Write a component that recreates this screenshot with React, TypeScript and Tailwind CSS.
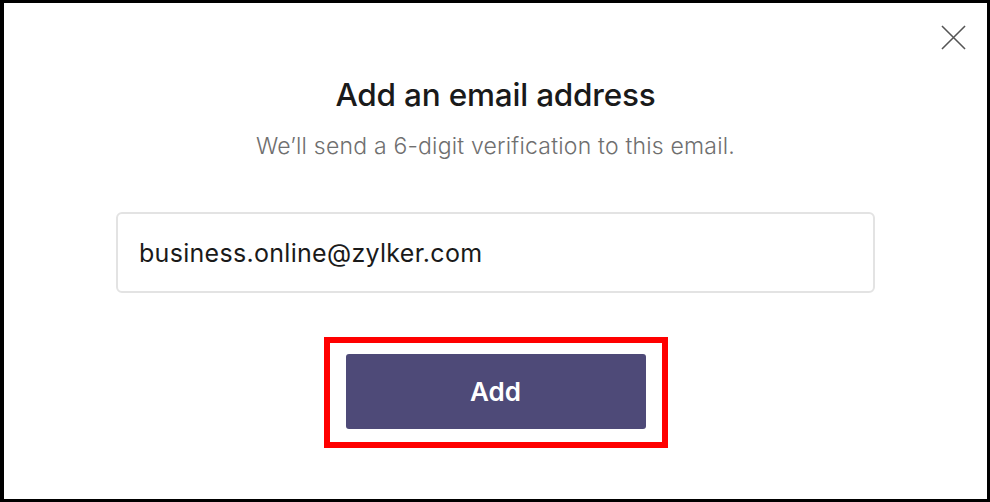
import React, { useState } from 'react';

export default function App() {
    const [email, setEmail] = useState('business.online@zylker.com');

    return (
        <div className="w-[990px] h-[502px] bg-white border-[3px] border-l-4 border-black relative" style={{ fontFamily: 'Inter, "Noto Sans", sans-serif' }}>
            <button className="absolute top-[19px] right-[19px] w-[30px] h-[30px] flex items-center justify-center text-[#555]">
                <svg width="25" height="25" viewBox="0 0 26 26" fill="none" stroke="currentColor" strokeWidth="1.6">
                    <path d="M1 1 L25 25 M25 1 L1 25" />
                </svg>
            </button>

            <div className="flex flex-col items-center pt-[72px]">
                <h3 className="text-[31.5px] leading-[40px] font-medium text-[#1a1a1a] tracking-[-0.2px]">Add an email address</h3>
                <p className="mt-[16px] text-[23px] leading-[30px] font-light text-[#6f6f6f] tracking-[0.2px]">We’ll send a 6-digit verification to this email.</p>

                <input
                    type="text"
                    value={email}
                    onChange={e => setEmail(e.target.value)}
                    className="mt-[51px] w-[759px] h-[81px] px-[21px] rounded-md border-2 border-[#e3e3e3] text-[25px] tracking-[0.3px] text-[#1a1a1a] outline-none"
                />

                <div className="mt-[44px] border-[6px] border-[#ff0000] p-[11px_16px_13px]">
                    <button className="w-[300px] h-[75px] rounded-[3px] bg-[#4e4a78] text-white text-[26px] font-semibold">
                        Add
                    </button>
                </div>
            </div>
        </div>
    );
}
